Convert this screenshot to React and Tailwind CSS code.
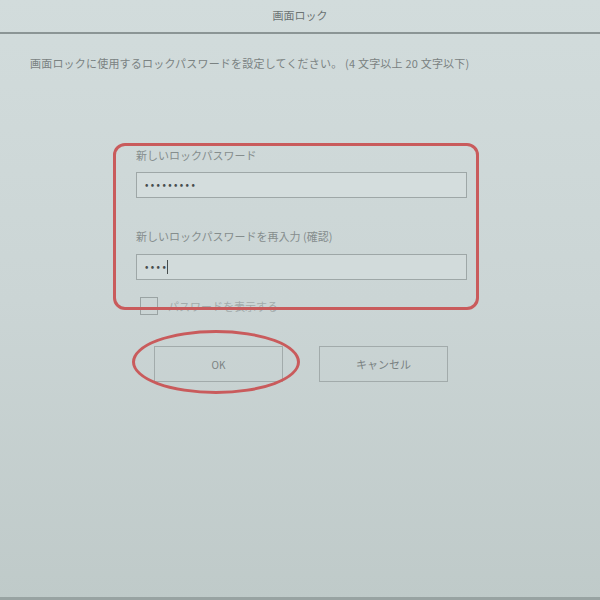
export default function App() {
  const font = { fontFamily: '"Noto Sans CJK JP", "Noto Sans", sans-serif' };

  return (
    <div
      className="relative h-[600px] w-[600px] overflow-hidden bg-gradient-to-b from-[#d2dcdc] via-[#cbd5d5] to-[#bfcac9] text-[#737b7b]"
      style={font}
    >
      {/* title bar */}
      <div className="flex h-[34px] items-center justify-center border-b-2 border-[#8b9595] pb-[2px] text-[11px] text-[#6c7373]">
        画面ロック
      </div>

      <p className="mt-[22px] pl-[30px] text-[11px] leading-[14px] tracking-[0.2px] text-[#7a8282]">
        画面ロックに使用するロックパスワードを設定してください。 (4 文字以上 20 文字以下)
      </p>

      <div className="ml-[136px] mt-[78px] w-[331px]">
        <label className="block text-[11px] leading-[14px] text-[#858d8d]">新しいロックパスワード</label>
        <div className="mt-[10px] flex h-[26px] items-center border border-[#9ea7a7] bg-[#d4dddd] pl-[8px]">
          <span className="text-[9px] font-bold tracking-[2.4px] text-[#474d4d]">•••••••••</span>
        </div>

        <label className="mt-[31px] block text-[11px] leading-[14px] text-[#858d8d]">
          新しいロックパスワードを再入力 (確認)
        </label>
        <div className="mt-[11px] flex h-[26px] items-center border border-[#9ea7a7] bg-[#d2dbdb] pl-[8px]">
          <span className="text-[9px] font-bold tracking-[2.4px] text-[#474d4d]">••••</span>
          <span className="ml-[-1px] h-[14px] w-px bg-[#474d4d]" />
        </div>

        <div className="mt-[17px] ml-[4px] flex items-center gap-[10px]">
          <div className="h-[18px] w-[18px] border border-[#9aa3a3]" />
          <span className="text-[11px] text-[#a3abab]">パスワードを表示する</span>
        </div>
      </div>

      <div className="mt-[31px] ml-[154px] flex gap-[36px]">
        <button className="flex h-[36px] w-[129px] items-center justify-center border border-[#a2abab] text-[10px] text-[#7a8282]">
          OK
        </button>
        <button className="flex h-[36px] w-[129px] items-center justify-center border border-[#a2abab] text-[11px] text-[#7a8282]">
          キャンセル
        </button>
      </div>

      {/* red annotations */}
      <div className="absolute left-[113px] top-[143px] h-[167px] w-[366px] rounded-[12px] border-[3px] border-[#c95b5c]" />
      <div className="absolute left-[132px] top-[330px] h-[64px] w-[168px] rounded-[50%] border-[3px] border-[#c95b5c]" />

      <div className="absolute bottom-0 left-0 h-[3px] w-full bg-[#98a3a2]" />
    </div>
  );
}
